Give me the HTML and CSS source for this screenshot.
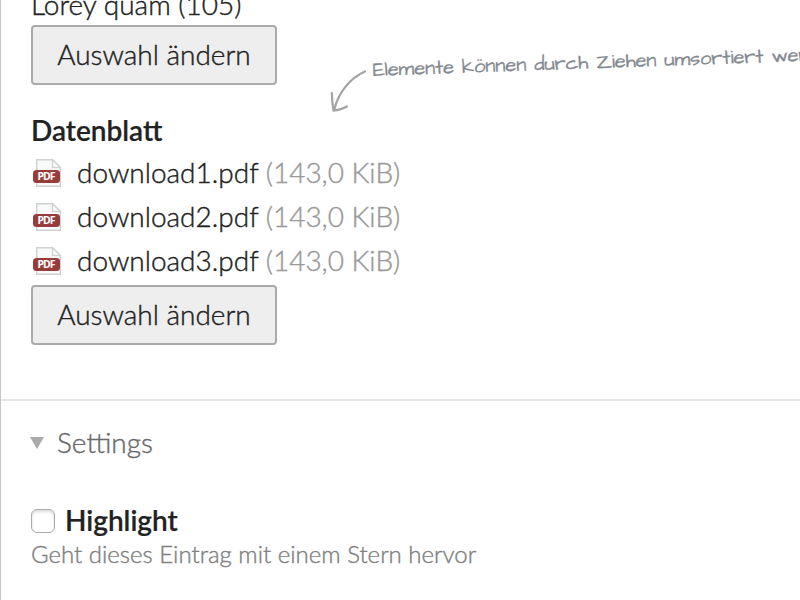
FILE: index.html
```html
<!DOCTYPE html>
<html lang="de">
<head>
  <meta charset="UTF-8">
  <title>Eintrag bearbeiten</title>
  <link rel="stylesheet" href="styles.css">
</head>
<body>
<svg class="defs" width="0" height="0">
  <symbol id="pdf" viewBox="0 0 30 30">
    <path d="M4.7 1.7H20.5L28.3 9.5V28.3H4.7Z" fill="#f9fbfa" stroke="#d0d1d1" stroke-width="1.4"/>
    <path d="M20.5 1.7V9.5H28.3Z" fill="#fff" stroke="#d0d1d1" stroke-width="1.4"/>
    <rect x="1" y="12" width="27" height="13" rx="3.5" fill="#963c3b"/>
    <text x="5.4" y="22" textLength="18" font-size="10.5" font-weight="bold" font-family="Noto Sans, sans-serif" fill="#fff">PDF</text>
  </symbol>
</svg>
<div class="main">
  <div class="widget pages">
    <ul>
      <li>Lorey quam (105)</li>
    </ul>
    <button class="submit" type="button">Auswahl ändern</button>
  </div>

  <div class="widget files">
    <h3>Datenblatt</h3>
    <!-- Hinweis zum Sortieren -->
    <div class="hint">
      <svg width="40" height="46" viewBox="0 0 40 46" fill="none" stroke="#a3a3a3" stroke-width="2.2" stroke-linecap="round">
        <path d="M35 3.5C20 10 8 25 4 42.5"/>
        <path d="M1.8 25Q2 34 3.5 42.5Q11 42 17 38.5"/>
      </svg>
      <span>Elemente können durch Ziehen umsortiert werden</span>
    </div>
    <ul>
      <li><svg class="icon"><use href="#pdf"/></svg><span class="name">download1.pdf</span> <span class="size">(143,0 KiB)</span></li>
      <li><svg class="icon"><use href="#pdf"/></svg><span class="name">download2.pdf</span> <span class="size">(143,0 KiB)</span></li>
      <li><svg class="icon"><use href="#pdf"/></svg><span class="name">download3.pdf</span> <span class="size">(143,0 KiB)</span></li>
    </ul>
    <button class="submit" type="button">Auswahl ändern</button>
  </div>

  <div class="box">
    <div class="legend"><svg width="14" height="12"><path d="M0 0H14L7 12Z" fill="#a9abad"/></svg><span>Settings</span></div>
    <div class="checkbox">
      <input type="checkbox" id="highlight">
      <label for="highlight">Highlight</label>
    </div>
    <p class="tip">Geht dieses Eintrag mit einem Stern hervor</p>
  </div>
</div>
</body>
</html>
```

FILE: styles.css
```css
* {
    box-sizing: border-box;
}

body {
    margin: 0;
    overflow: hidden;
    background: #fff;
    color: #222;
    font: 300 28px/36px Lato, sans-serif;
    -webkit-text-stroke: 0.4px;
}

ul, h3, p {
    margin: 0;
    padding: 0;
    list-style: none;
}

.defs {
    position: absolute;
}

.main {
    height: 600px;
    border-left: 1px solid #c6c6c6;
    overflow: hidden;
}

.widget {
    position: relative;
    padding-left: 30px;
}

.pages {
    height: 112px;
}

.pages ul {
    height: 25px;
    display: flex;
    align-items: flex-end;
}

.pages li {
    margin-bottom: 3px;
}

.submit {
    display: block;
    width: 246px;
    height: 60px;
    padding: 0 0 2px;
    border: 2px solid #aaa;
    border-radius: 4px;
    background: #eee;
    color: #222;
    font: inherit;
    -webkit-text-stroke: 0.4px;
}

.files {
    height: 287px;
}

h3 {
    height: 39px;
    font-size: 28px;
    font-weight: 600;
    line-height: 36px;
    -webkit-text-stroke: 0.2px;
}

.files li {
    display: flex;
    align-items: center;
    height: 44px;
    padding-left: 1px;
}

.files li span {
    margin-top: -2px;
}

.files ul {
    height: 134px;
}

.icon {
    width: 30px;
    height: 30px;
    margin-right: 15px;
    -webkit-text-stroke: 0;
}

.size {
    margin-left: 7px;
    color: #999;
}

/* liegt leicht gedreht über der Liste */
.hint {
    position: absolute;
    left: 329px;
    top: -44px;
    display: flex;
    white-space: nowrap;
    color: #838990;
    font: 20px/24px "Architects Daughter", "Comic Neue", "DejaVu Sans", sans-serif;
    -webkit-text-stroke: 0.3px;
}

.hint span {
    margin: -10px 0 0 3px;
    transform: rotate(-2deg);
    transform-origin: 0 17px;
}

.box {
    border-top: 2px solid #e6e6e6;
    padding: 23px 0 0 29px;
}

.legend {
    display: flex;
    align-items: center;
    gap: 13px;
    color: #6a6a6c;
}

.legend svg {
    margin-top: 1px;
}

.checkbox {
    display: flex;
    align-items: center;
    margin-top: 42px;
    font-weight: 600;
    -webkit-text-stroke: 0.2px;
}

.checkbox input {
    appearance: none;
    width: 24px;
    height: 24px;
    margin: 1px 10px 0 1px;
    border: 1px solid #aaa;
    border-radius: 6px;
    background: #fff;
    box-shadow: inset 0 2px 3px #ddd;
}

.tip {
    margin: 1px 0 0 1px;
    color: #808080;
    font-size: 24px;
    line-height: 30px;
}
```
